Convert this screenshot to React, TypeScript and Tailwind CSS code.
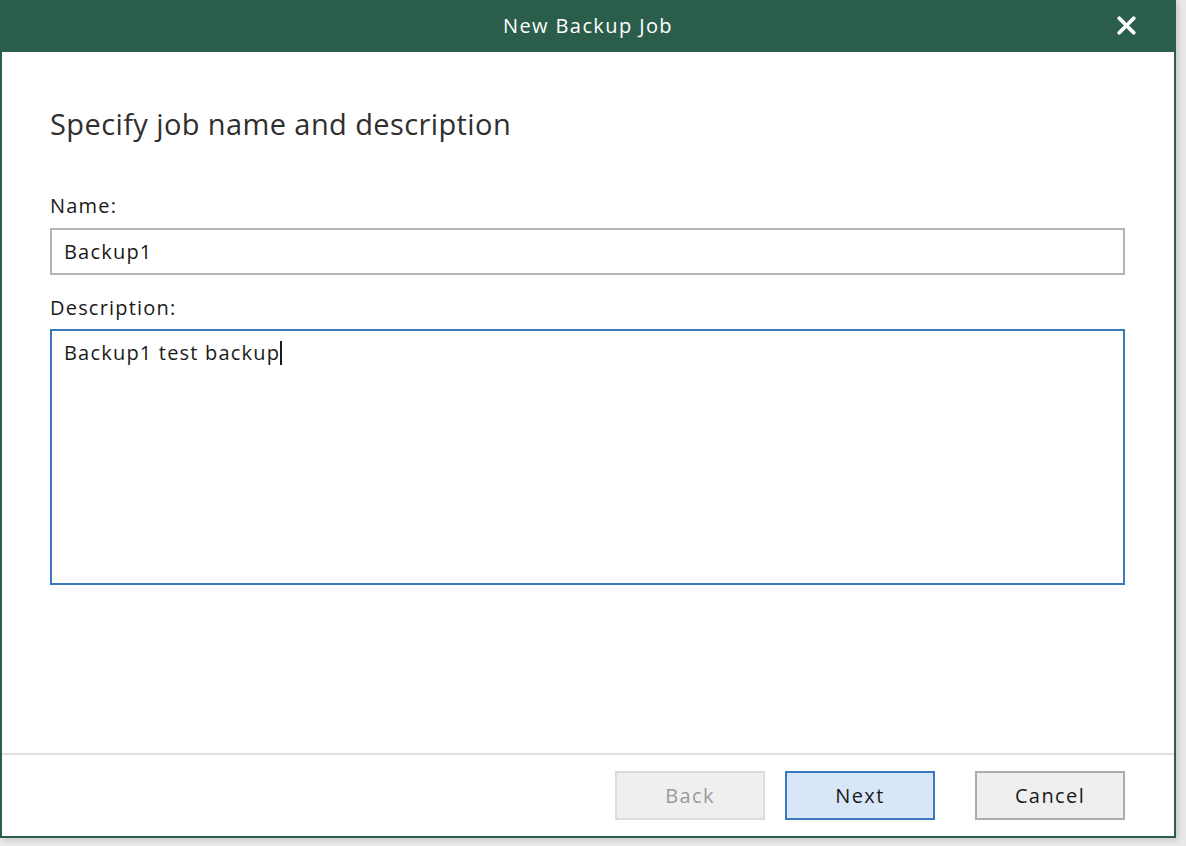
import { X } from 'lucide-react'

const font = { fontFamily: '"Open Sans", "Noto Sans", sans-serif' }

function Button({ label, variant }: { label: string; variant: 'disabled' | 'primary' | 'default' }) {
  const styles = {
    disabled: 'border-[#dcdcdc] bg-[#efefef] text-[#9a9a9a]',
    primary: 'border-[#3a78c0] bg-[#d7e7f8] text-[#1a1a1a]',
    default: 'border-[#adadad] bg-[#efefef] text-[#1a1a1a]',
  }[variant]
  return (
    <button className={`h-[49px] w-[150px] border-2 text-[20px] tracking-[1.4px] ${styles}`}>{label}</button>
  )
}

export default function App() {
  return (
    <div className="w-[1186px] h-[846px] bg-[#e9e9e9] overflow-hidden" style={font}>
      <div className="w-[1176px] h-[838px] flex flex-col bg-white border-x-2 border-b-2 border-[#2a5e4a] shadow-[2px_2px_6px_rgba(0,0,0,0.15)]">
        {/* Title bar */}
        <div className="relative h-[52px] -mx-[2px] bg-[#2a5e4a] flex items-center justify-center">
          <span className="text-white text-[20px] tracking-[1.4px]">New Backup Job</span>
          <X className="absolute right-[35px] top-[11px] text-white" size={29} strokeWidth={3.2} />
        </div>

        {/* Body */}
        <div className="flex-1 pl-[48px] pr-[49px] pt-[54px] text-[20px] tracking-[1.2px] text-[#1a1a1a]">
          <h1 className="text-[29px] leading-[36px] text-[#2f2f2f] font-normal tracking-[0.4px]">
            Specify job name and description
          </h1>
          <div className="mt-[52px] leading-[24px]">Name:</div>
          <div className="mt-[10px] h-[47px] border-2 border-[#b4b4b4] flex items-center px-[12px]">
            Backup1
          </div>
          <div className="mt-[21px] leading-[24px]">Description:</div>
          <div className="mt-[9px] h-[256px] border-2 border-[#3a78c0] px-[12px] pt-[9px] leading-[26px]">
            Backup1 test backup
            <span className="inline-block w-[2px] h-[24px] bg-[#1a1a1a] align-middle -mt-[3px]" />
          </div>
        </div>

        {/* Footer */}
        <div className="border-t-2 border-[#e0e0e0] pt-[16px] pb-[16px] pr-[49px] flex justify-end">
          <Button label="Back" variant="disabled" />
          <div className="w-[20px]" />
          <Button label="Next" variant="primary" />
          <div className="w-[40px]" />
          <Button label="Cancel" variant="default" />
        </div>
      </div>
    </div>
  )
}
